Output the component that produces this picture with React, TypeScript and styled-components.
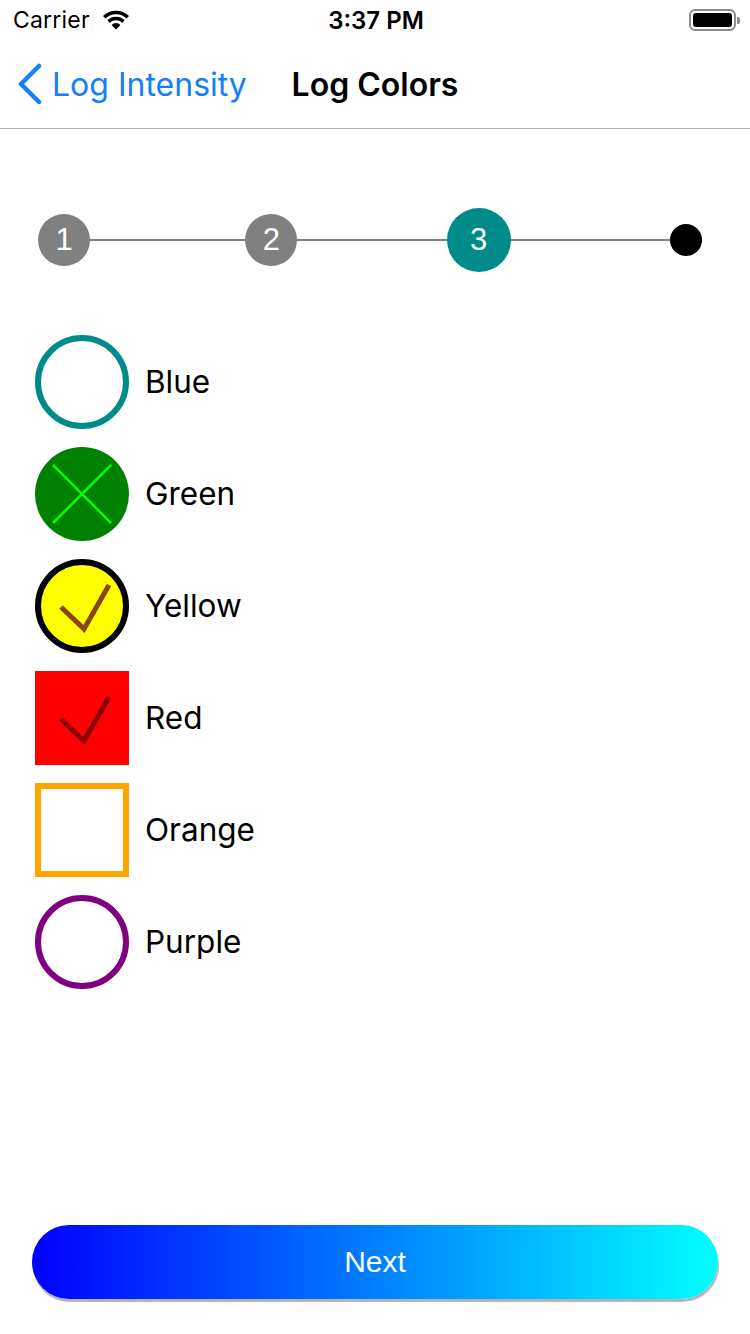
import React from "react";
import styled, { createGlobalStyle } from "styled-components";

const GlobalStyle = createGlobalStyle`
  html, body { margin: 0; padding: 0; background: #fff; }
  * { box-sizing: border-box; }
`;

const Screen = styled.div`
  width: 750px;
  height: 1334px;
  display: flex;
  flex-direction: column;
  background: #fff;
  font-family: Inter, "Noto Sans", sans-serif;
  color: #000;
  overflow: hidden;
`;

const StatusBar = styled.div`
  height: 40px;
  display: grid;
  grid-template-columns: 1fr auto 1fr;
  align-items: center;
  padding: 0 13px;
`;

const Carrier = styled.div`
  display: flex;
  align-items: center;
  gap: 12px;
  font-size: 23px;
  letter-spacing: 0.2px;
`;

const Time = styled.div`
  font-size: 24px;
  font-weight: 600;
  margin-left: 2px;
`;

const BatteryWrap = styled.div`
  justify-self: end;
  display: flex;
  align-items: center;
  gap: 1px;
  margin-right: -3px;
`;

const BatteryBody = styled.div`
  width: 47px;
  height: 22px;
  border: 2px solid #8e8e8e;
  border-radius: 6px;
  padding: 2px;
`;

const BatteryFill = styled.div`
  width: 100%;
  height: 100%;
  background: #000;
  border-radius: 3px;
`;

const BatteryNub = styled.div`
  width: 3px;
  height: 7px;
  background: #8e8e8e;
  border-radius: 0 2px 2px 0;
`;

const NavBar = styled.div`
  height: 89px;
  display: grid;
  grid-template-columns: 1fr auto 1fr;
  align-items: center;
  border-bottom: 1px solid #b2b2b2;
`;

const BackButton = styled.div`
  display: flex;
  align-items: center;
  gap: 9px;
  padding-left: 17px;
  color: #147efb;
  font-size: 32px;
  white-space: nowrap;
`;

const Title = styled.div`
  font-size: 32px;
  font-weight: 600;
`;

const Stepper = styled.div`
  position: relative;
  margin: 79px 32px 0;
  height: 64px;
  display: flex;
  justify-content: space-between;
  align-items: center;
`;

const Track = styled.div`
  position: absolute;
  left: 32px;
  right: 32px;
  top: 31px;
  height: 2px;
  background: #808080;
`;

const StepSlot = styled.div`
  position: relative;
  width: 64px;
  display: flex;
  justify-content: center;
`;

const StepCircle = styled.div<{ $size: number; $bg: string }>`
  width: ${(p) => p.$size}px;
  height: ${(p) => p.$size}px;
  border-radius: 50%;
  background: ${(p) => p.$bg};
  color: #fff;
  display: flex;
  align-items: center;
  justify-content: center;
  font-family: "Liberation Sans", Arial, sans-serif;
  font-size: 31px;
`;

const List = styled.div`
  margin-top: 63px;
  padding-left: 35px;
  display: flex;
  flex-direction: column;
  gap: 18px;
`;

const Row = styled.div`
  display: flex;
  align-items: center;
  gap: 16px;
  height: 94px;
`;

const Label = styled.div`
  font-size: 31.5px;
  margin-top: -2px;
`;

const Swatch = styled.div<{ $round: boolean; $fill: string; $border: string; $bw: number }>`
  position: relative;
  width: 94px;
  height: 94px;
  flex: none;
  border-radius: ${(p) => (p.$round ? "50%" : "0")};
  background: ${(p) => p.$fill};
  border: ${(p) => p.$bw}px solid ${(p) => p.$border};
`;

const Mark = styled.svg<{ $inset: number }>`
  position: absolute;
  left: ${(p) => -p.$inset}px;
  top: ${(p) => -p.$inset}px;
  display: block;
  width: 94px;
  height: 94px;
`;

const Spacer = styled.div`
  flex: 1;
`;

const NextButton = styled.button`
  margin: 0 32px 35px;
  height: 74px;
  border: none;
  border-radius: 37px;
  background: linear-gradient(to right, #0000ff, #00ffff);
  box-shadow: 1px 3px 1px rgba(0, 0, 0, 0.3);
  color: #fff;
  font-family: "Liberation Sans", Arial, sans-serif;
  font-size: 30px;
  padding: 0;
`;

const Wifi = () => (
  <svg width="28" height="20" viewBox="0 0 28 20">
    <path d="M2.2 7.2 A17 17 0 0 1 25.8 7.2" fill="none" stroke="#000" strokeWidth="3.4" />
    <path d="M6.5 11.4 A11 11 0 0 1 21.5 11.4" fill="none" stroke="#000" strokeWidth="3.4" />
    <path d="M14 19.5 L9.6 14.9 A6 6 0 0 1 18.4 14.9 Z" fill="#000" />
  </svg>
);

const Chevron = () => (
  <svg width="26" height="42" viewBox="0 0 26 42">
    <path d="M22 3 L4 21 L22 39" fill="none" stroke="#147efb" strokeWidth="4.5" strokeLinecap="round" strokeLinejoin="round" />
  </svg>
);

type Item = {
  label: string;
  round: boolean;
  fill: string;
  border: string;
  bw: number;
  mark?: "x" | "check";
  markColor?: string;
};

const items: Item[] = [
  { label: "Blue", round: true, fill: "#fff", border: "#008b8b", bw: 6 },
  { label: "Green", round: true, fill: "#008000", border: "#008000", bw: 0, mark: "x", markColor: "#00ff00" },
  { label: "Yellow", round: true, fill: "#ffff00", border: "#000", bw: 6, mark: "check", markColor: "#8b4513" },
  { label: "Red", round: false, fill: "#ff0000", border: "#ff0000", bw: 0, mark: "check", markColor: "#8b0000" },
  { label: "Orange", round: false, fill: "#fff", border: "#ffa500", bw: 6 },
  { label: "Purple", round: true, fill: "#fff", border: "#800080", bw: 6 },
];

const MarkIcon = ({ kind, color, inset }: { kind: "x" | "check"; color: string; inset: number }) => (
  <Mark viewBox="0 0 94 94" $inset={inset}>
    {kind === "x" ? (
      <path d="M18 18 L76 76 M76 18 L18 76" stroke={color} strokeWidth="2.5" fill="none" />
    ) : (
      <path d="M26 48 L49 70 L74 26" stroke={color} strokeWidth="5" fill="none" />
    )}
  </Mark>
);

export default function App() {
  return (
    <>
      <GlobalStyle />
      <Screen>
        <StatusBar>
          <Carrier>
            Carrier
            <Wifi />
          </Carrier>
          <Time>3:37 PM</Time>
          <BatteryWrap>
            <BatteryBody>
              <BatteryFill />
            </BatteryBody>
            <BatteryNub />
          </BatteryWrap>
        </StatusBar>
        <NavBar>
          <BackButton>
            <Chevron />
            Log Intensity
          </BackButton>
          <Title>Log Colors</Title>
          <div />
        </NavBar>
        <Stepper>
          <Track />
          <StepSlot>
            <StepCircle $size={52} $bg="#808080">1</StepCircle>
          </StepSlot>
          <StepSlot>
            <StepCircle $size={52} $bg="#808080">2</StepCircle>
          </StepSlot>
          <StepSlot>
            <StepCircle $size={64} $bg="#008b8b">3</StepCircle>
          </StepSlot>
          <StepSlot>
            <StepCircle $size={32} $bg="#000" />
          </StepSlot>
        </Stepper>
        <List>
          {items.map((it) => (
            <Row key={it.label}>
              <Swatch $round={it.round} $fill={it.fill} $border={it.border} $bw={it.bw}>
                {it.mark && <MarkIcon kind={it.mark} color={it.markColor!} inset={it.bw} />}
              </Swatch>
              <Label>{it.label}</Label>
            </Row>
          ))}
        </List>
        <Spacer />
        <NextButton>Next</NextButton>
      </Screen>
    </>
  );
}
